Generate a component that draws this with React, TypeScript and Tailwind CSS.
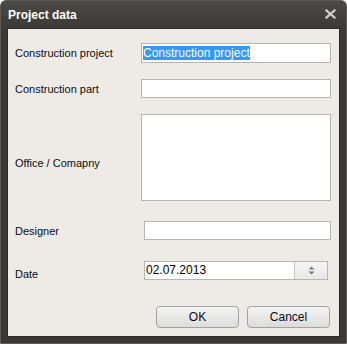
import React from "react";

const font = { fontFamily: '"Liberation Sans", Arial, sans-serif' };

function Row({
  label,
  labelW,
  children,
  className = "",
  labelClass = "",
}: {
  label: string;
  labelW: string;
  children: React.ReactNode;
  className?: string;
  labelClass?: string;
}) {
  return (
    <div className={`flex pl-[7px] ${className}`}>
      <span className={`shrink-0 text-[11px] leading-[14px] text-[#0b0b14] ${labelW} ${labelClass}`}>
        {label}
      </span>
      {children}
    </div>
  );
}

export default function App() {
  return (
    <div
      style={font}
      className="flex h-[344px] w-[347px] flex-col overflow-hidden rounded-t-[6px] border border-[#5d5c58] bg-gradient-to-b from-[#4a4945] to-[#3a3935] to-[30px]"
    >
      {/* title bar */}
      <div className="flex h-[27px] shrink-0 items-center justify-between pl-[7px] pr-[10px]">
        <span className="text-[12px] font-bold text-white">Project data</span>
        <svg width="11" height="10" viewBox="0 0 11 10" className="mb-[1px]">
          <path d="M1.5 1.5 L9.5 8.5 M9.5 1.5 L1.5 8.5" stroke="#cfcfcf" strokeWidth="2.3" strokeLinecap="square" />
        </svg>
      </div>

      {/* client area */}
      <div className="mx-[6px] mb-[6px] flex flex-1 flex-col border border-[#2b2a27] bg-[#eeebe7] pb-[8px] pt-[14px]">
        <Row label="Construction project" labelW="w-[126px]" className="items-center">
          <div className="flex h-[20px] w-[190px] items-center border border-[#b5b5b5] bg-white px-[1px]">
            <span className="bg-[#3399ff] text-[12px] leading-[14px] text-white">Construction project</span>
          </div>
        </Row>

        <Row label="Construction part" labelW="w-[126px]" className="mt-[16px] items-center">
          <div className="h-[19px] w-[190px] border border-[#b5b5b5] bg-white" />
        </Row>

        <Row label="Office / Comapny" labelW="w-[126px]" labelClass="pt-[42px]" className="mt-[16px] items-start">
          <div className="h-[87px] w-[190px] border border-[#b5b5b5] bg-white" />
        </Row>

        <Row label="Designer" labelW="w-[129px]" className="mt-[20px] items-center">
          <div className="h-[19px] w-[187px] border border-[#b5b5b5] bg-white" />
        </Row>

        <Row label="Date" labelW="w-[129px]" labelClass="mb-[-1px]" className="mt-[21px] items-end">
          <div className="flex h-[19px] w-[184px] border border-[#b5b5b5] bg-white">
            <span className="flex-1 pl-[1px] text-[12px] leading-[17px] text-black">02.07.2013</span>
            <div className="flex w-[33px] items-center justify-center border-l border-[#c8c8c8] bg-gradient-to-b from-[#f5f5f5] to-[#e8e8e8]">
              <svg width="7" height="9" viewBox="0 0 7 9">
                <path d="M3.5 0.5 L6.5 3.5 L0.5 3.5 Z M0.5 5.5 L6.5 5.5 L3.5 8.5 Z" fill="#7a7a7a" />
              </svg>
            </div>
          </div>
        </Row>

        <div className="mt-[26px] flex justify-end gap-[8px] pr-[9px]">
          <button className="h-[22px] w-[83px] rounded-[4px] border border-[#a3a3a3] bg-gradient-to-b from-[#f4f4f4] to-[#dcdcdc] text-[12px] text-[#0b0b14]">
            OK
          </button>
          <button className="h-[22px] w-[83px] rounded-[4px] border border-[#a3a3a3] bg-gradient-to-b from-[#f4f4f4] to-[#dcdcdc] text-[12px] text-[#0b0b14]">
            Cancel
          </button>
        </div>
      </div>
    </div>
  );
}
